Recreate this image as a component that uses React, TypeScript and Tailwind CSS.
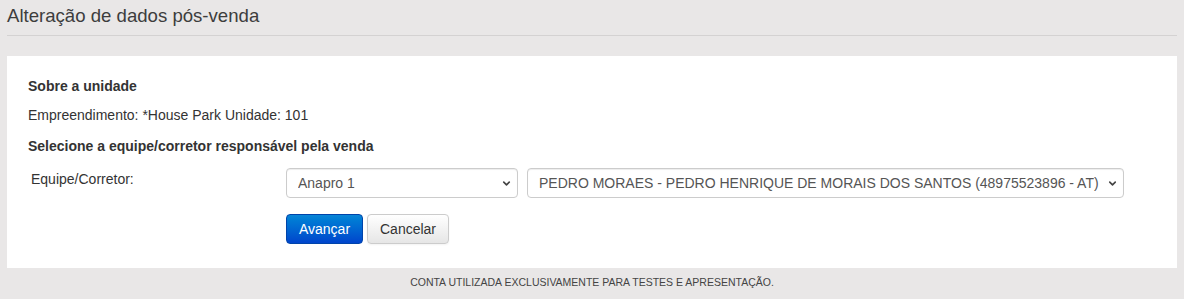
import { ChevronDown } from 'lucide-react';

function Select({ value, className }: { value: string; className: string }) {
  return (
    <div className={`relative ${className}`}>
      <select
        defaultValue={value}
        className="h-[30px] w-full appearance-none rounded-[4px] border border-[#cccccc] bg-white pl-[11px] pr-6 text-[14px] text-[#555555] shadow-[inset_0_1px_1px_rgba(0,0,0,0.075)] outline-none"
      >
        <option>{value}</option>
      </select>
      <ChevronDown
        size={11}
        strokeWidth={3.5}
        className="pointer-events-none absolute right-[6px] top-[10px] text-[#444444]"
      />
    </div>
  );
}

export default function App() {
  return (
    <div className="flex h-[299px] w-[1184px] flex-col bg-[#e9e7e7] font-['Liberation_Sans',Arial,sans-serif] text-[#333333]">
      <div className="mx-[7px] h-[36px] border-b border-[#d4d2d2] pt-[2px] text-[18.6px] text-[#3d3d3d]">
        Alteração de dados pós-venda
      </div>

      <div className="mx-[7px] mt-[20px] h-[212px] bg-white pl-[21px] pt-[20px]">
        <div className="text-[14px] font-bold leading-[20px]">Sobre a unidade</div>
        <div className="mt-[9px] text-[14px] leading-[20px]">
          Empreendimento: *House Park Unidade: 101
        </div>
        <div className="mt-[11px] text-[14px] font-bold leading-[20px]">
          Selecione a equipe/corretor responsável pela venda
        </div>

        <div className="mt-[12px] flex">
          <div className="w-[258px] pl-[3px] pt-[1px] text-[14px] leading-[20px]">Equipe/Corretor:</div>
          <div className="flex flex-col">
            <div className="flex gap-[9px]">
              <Select value="Anapro 1" className="w-[232px]" />
              <Select
                value="PEDRO MORAES - PEDRO HENRIQUE DE MORAIS DOS SANTOS (48975523896 - AT)"
                className="w-[597px]"
              />
            </div>
            <div className="mt-[16px] flex gap-[4px]">
              <button className="h-[30px] w-[77px] rounded-[4px] border border-[#0044aa] bg-gradient-to-b from-[#0a85d6] to-[#0044cc] text-[14px] text-white">
                Avançar
              </button>
              <button className="h-[30px] w-[82px] rounded-[4px] border border-[#cccccc] bg-gradient-to-b from-white to-[#e6e6e6] text-[14px] text-[#333333] shadow-[0_1px_2px_rgba(0,0,0,0.05)]">
                Cancelar
              </button>
            </div>
          </div>
        </div>
      </div>

      <div className="pt-[7px] text-center text-[10.5px] text-[#444444]">
        CONTA UTILIZADA EXCLUSIVAMENTE PARA TESTES E APRESENTAÇÃO.
      </div>
    </div>
  );
}
